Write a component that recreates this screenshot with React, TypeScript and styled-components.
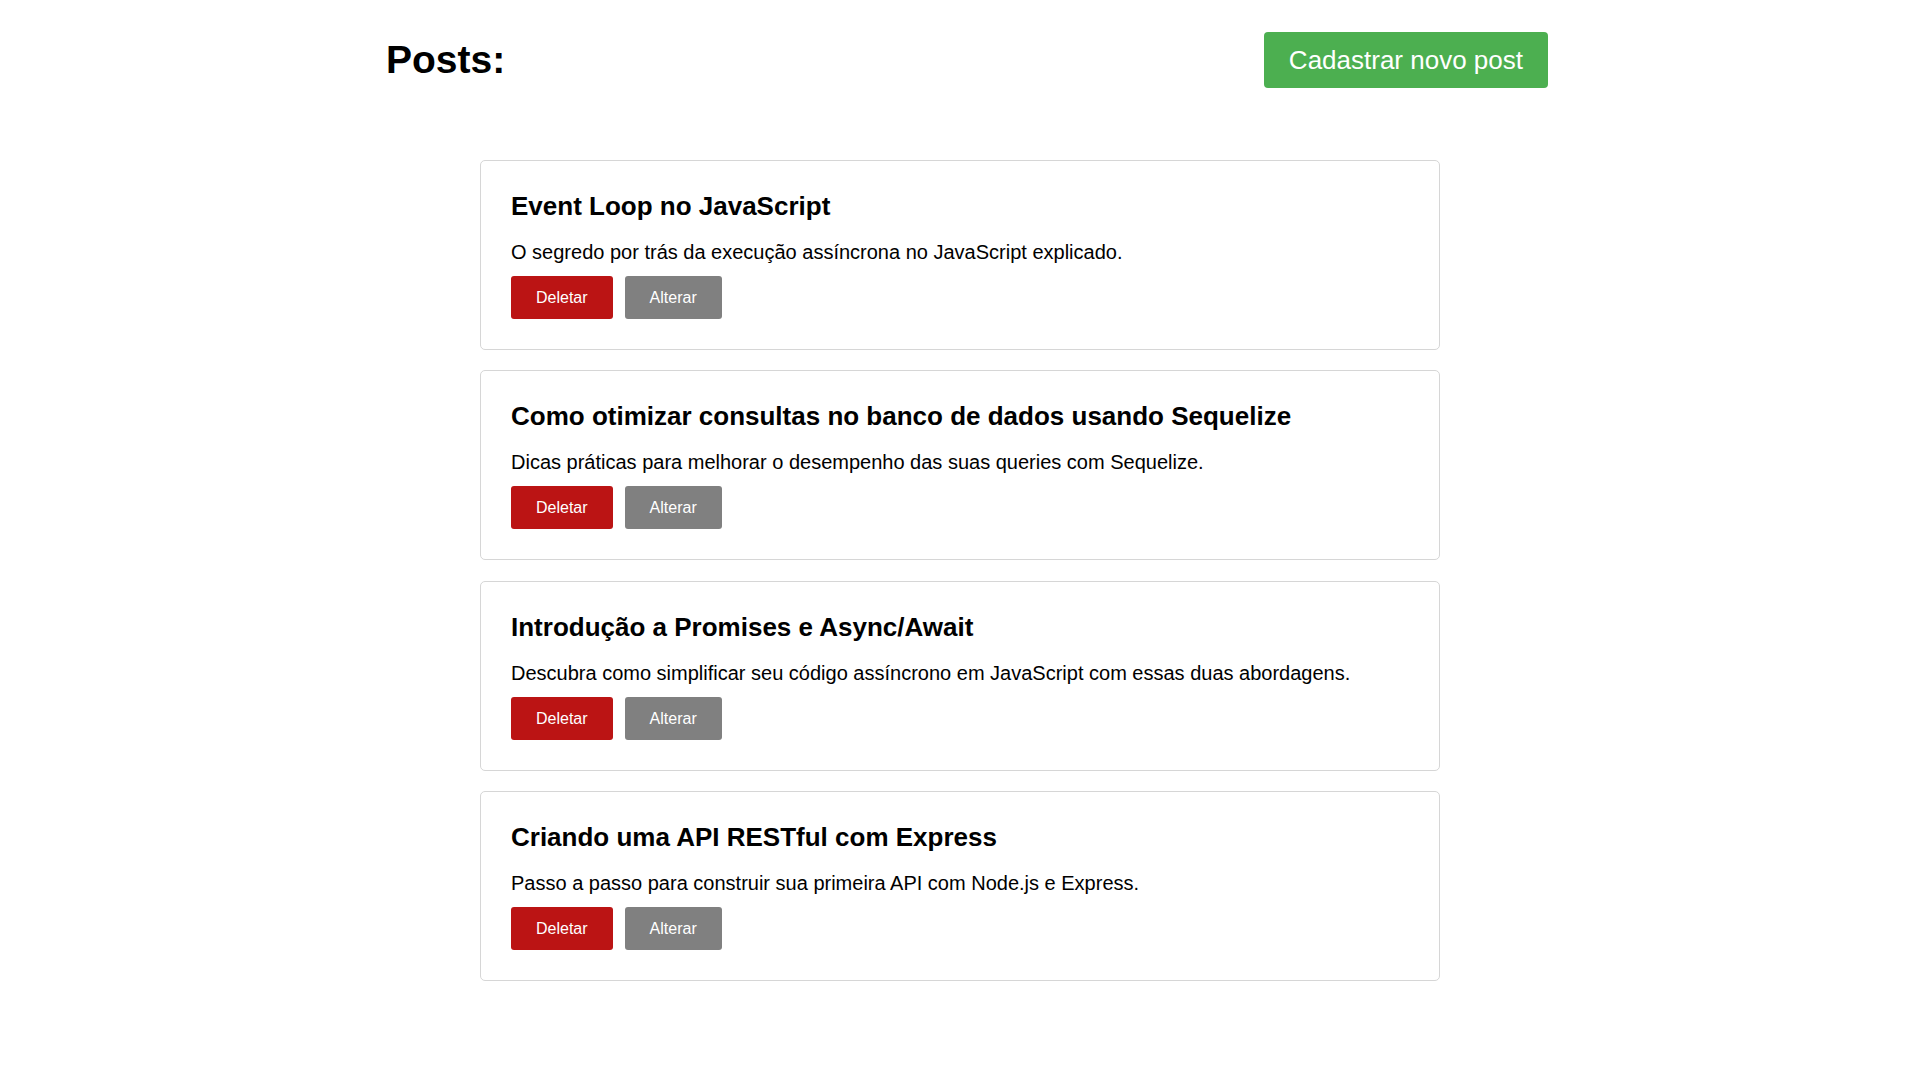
import React from "react";
import styled, { createGlobalStyle } from "styled-components";

const GlobalStyle = createGlobalStyle`
  html, body {
    margin: 0;
    padding: 0;
    background: #ffffff;
    font-family: "Liberation Sans", Arial, sans-serif;
    color: #000000;
  }
`;

const Page = styled.div`
  display: flex;
  flex-direction: column;
  padding: 32px 0 60px;
`;

const Header = styled.header`
  width: 1162px;
  margin: 0 auto;
  padding-left: 14px;
  display: flex;
  align-items: center;
  justify-content: space-between;
`;

const Title = styled.h1`
  margin: 0;
  font-size: 39px;
  font-weight: bold;
`;

const NewPostButton = styled.button`
  background: #4caf50;
  color: #ffffff;
  border: none;
  border-radius: 4px;
  padding: 13px 25px;
  font-family: inherit;
  font-size: 26px;
  line-height: 30px;
  cursor: pointer;
`;

const List = styled.main`
  width: 960px;
  margin: 72px auto 0;
  display: flex;
  flex-direction: column;
  gap: 20.3px;
`;

const Card = styled.article`
  border: 1px solid #d6d6d6;
  border-radius: 5px;
  padding: 30px;
  display: flex;
  flex-direction: column;
`;

const PostTitle = styled.h2`
  margin: 0 0 20px;
  font-size: 26px;
  font-weight: bold;
  line-height: 30px;
`;

const PostText = styled.p`
  margin: 0 0 12px;
  font-size: 20px;
  line-height: 23px;
`;

const Actions = styled.div`
  display: flex;
  gap: 12px;
`;

const ActionButton = styled.button<{ $variant: "danger" | "neutral" }>`
  background: ${(p) => (p.$variant === "danger" ? "#bb1414" : "#808080")};
  color: #ffffff;
  border: none;
  border-radius: 3px;
  padding: 12px 25px;
  font-family: inherit;
  font-size: 16px;
  line-height: 19px;
  cursor: pointer;
`;

const posts = [
  {
    title: "Event Loop no JavaScript",
    text: "O segredo por trás da execução assíncrona no JavaScript explicado.",
  },
  {
    title: "Como otimizar consultas no banco de dados usando Sequelize",
    text: "Dicas práticas para melhorar o desempenho das suas queries com Sequelize.",
  },
  {
    title: "Introdução a Promises e Async/Await",
    text: "Descubra como simplificar seu código assíncrono em JavaScript com essas duas abordagens.",
  },
  {
    title: "Criando uma API RESTful com Express",
    text: "Passo a passo para construir sua primeira API com Node.js e Express.",
  },
];

export default function App() {
  return (
    <>
      <GlobalStyle />
      <Page>
        <Header>
          <Title>Posts:</Title>
          <NewPostButton>Cadastrar novo post</NewPostButton>
        </Header>
        <List>
          {posts.map((post) => (
            <Card key={post.title}>
              <PostTitle>{post.title}</PostTitle>
              <PostText>{post.text}</PostText>
              <Actions>
                <ActionButton $variant="danger">Deletar</ActionButton>
                <ActionButton $variant="neutral">Alterar</ActionButton>
              </Actions>
            </Card>
          ))}
        </List>
      </Page>
    </>
  );
}
